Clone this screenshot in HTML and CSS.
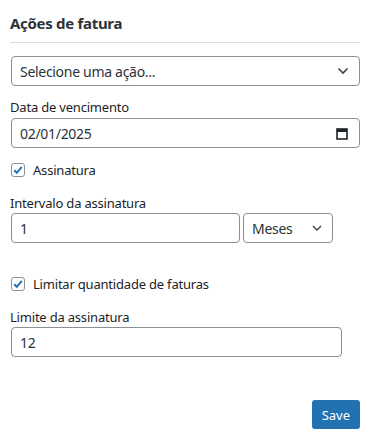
FILE: index.html
```html
<!DOCTYPE html>
<html lang="pt">
<head>
<meta charset="utf-8">
<link rel="stylesheet" href="styles.css">
</head>
<body>
<div class="panel">
  <h2 class="title">Ações de fatura</h2>
  <div class="field first">
    <div class="select">
      <span>Selecione uma ação...</span>
      <svg class="chev" width="12" height="8" viewBox="0 0 12 8"><path d="M1.5 1.5 L6 6 L10.5 1.5" fill="none" stroke="#3c434a" stroke-width="1.6"/></svg>
    </div>
  </div>
  <div class="field f-date">
    <label class="label">Data de vencimento</label>
    <div class="input date">
      <span>02/01/2025</span>
      <svg class="cal" width="12" height="13" viewBox="0 0 12 13"><rect x="1" y="2" width="10" height="10" fill="none" stroke="#1d2327" stroke-width="1.6"/><rect x="1" y="2" width="10" height="3" fill="#1d2327"/></svg>
    </div>
  </div>
  <div class="check">
    <span class="box"><svg width="12" height="12" viewBox="0 0 12 12"><path d="M2.2 6.2 L4.8 8.8 L9.8 2.8" fill="none" stroke="#2271b1" stroke-width="2"/></svg></span>
    <span>Assinatura</span>
  </div>
  <div class="field">
    <label class="label">Intervalo da assinatura</label>
    <div class="row">
      <div class="input grow"><span>1</span></div>
      <div class="select small">
        <span>Meses</span>
        <svg class="chev" width="12" height="8" viewBox="0 0 12 8"><path d="M2 2 L6 6 L10 2" fill="none" stroke="#3c434a" stroke-width="1.4"/></svg>
      </div>
    </div>
  </div>
  <div class="check second">
    <span class="box"><svg width="12" height="12" viewBox="0 0 12 12"><path d="M2.2 6.2 L4.8 8.8 L9.8 2.8" fill="none" stroke="#2271b1" stroke-width="2"/></svg></span>
    <span>Limitar quantidade de faturas</span>
  </div>
  <div class="field">
    <label class="label">Limite da assinatura</label>
    <div class="input limit"><span>12</span></div>
  </div>
  <div class="actions">
    <button class="save">Save</button>
  </div>
</div>
</body>
</html>
```
FILE: styles.css
```css
* { box-sizing: border-box; }
html, body { margin: 0; background: #fff; }
body {
  font-family: "Noto Sans", "Open Sans", sans-serif;
  color: #1d2327;
  font-size: 14px;
}
.panel {
  padding: 12px 12px 0 10px;
  display: flex;
  flex-direction: column;
}
.title {
  margin: 0;
  font-size: 15px;
  letter-spacing: -0.3px;
  font-weight: 700;
  color: #2c3338;
  line-height: 22px;
  padding-bottom: 8px;
  border-bottom: 1px solid #dcdcde;
}
.field { display: flex; flex-direction: column; margin-top: 15px; }
.field.first { margin-top: 13px; }
.field.f-date { margin-top: 12px; }
.f-date .label { margin-bottom: 2px; }
.label {
  font-size: 13px;
  letter-spacing: -0.2px;
  line-height: 18px;
  margin-bottom: 1px;
  color: #1d2327;
}
.select, .input {
  height: 30px;
  border: 1px solid #8c8f94;
  border-radius: 4px;
  display: flex;
  align-items: center;
  padding: 0 8px;
  font-size: 14px;
  letter-spacing: -0.3px;
  color: #2c3338;
  background: #fff;
}
.select { justify-content: space-between; margin-left: 1px; }
.input { margin-left: 1px; }
.date { justify-content: space-between; padding-right: 11px; }
.chev { margin-right: 2px; }
.check {
  display: flex;
  align-items: center;
  gap: 8px;
  margin-top: 13px;
  margin-left: 1px;
  font-size: 13px;
  letter-spacing: -0.2px;
  line-height: 18px;
}
.check.second { margin-top: 32px; }
.box {
  width: 14px; height: 14px;
  border: 1px solid #8c8f94;
  border-radius: 3px;
  display: flex;
  align-items: center;
  justify-content: center;
}
.row { display: flex; gap: 3px; }
.grow { width: 229px; }
.small { width: 90px; margin-left: 0; padding-right: 7px; }
.limit { width: 331px; }
.actions { display: flex; justify-content: flex-end; margin-top: 43px; }
.save {
  font-family: inherit;
  background: #2271b1;
  color: #fff;
  border: none;
  border-radius: 3px;
  font-size: 13px;
  height: 29px;
  padding: 0 10px;
  margin-right: 0;
}
```
